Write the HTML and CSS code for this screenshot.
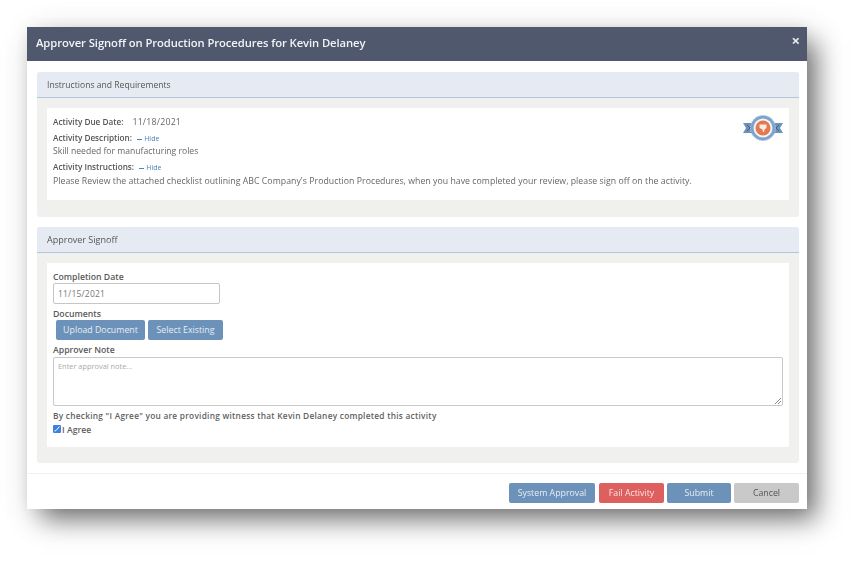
FILE: index.html
```html
<!DOCTYPE html>
<html lang="en">
<head>
<meta charset="utf-8">
<title>Approver Signoff</title>
<link rel="stylesheet" href="styles.css">
</head>
<body>
<div class="modal">
  <header class="modal-head">
    <h1 class="modal-title">Approver Signoff on Production Procedures for Kevin Delaney</h1>
    <span class="close">×</span>
  </header>
  <main class="modal-body">
    <section class="panel panel-top">
      <div class="panel-head">Instructions and Requirements</div>
      <div class="panel-body">
        <div class="card card-info">
          <svg class="badge" viewBox="0 0 40 26" width="40" height="26" aria-hidden="true">
            <path d="M0 8h10v10H0l3-5z" fill="#6d92ba"/>
            <path d="M40 8H30v10h10l-3-5z" fill="#6d92ba"/>
            <path d="M4 10l3 3-3 3M36 10l-3 3 3 3" fill="none" stroke="#46607f" stroke-width="1"/>
            <circle cx="20" cy="13" r="12.500" fill="#7ea4c9" stroke="#a9c3dc" stroke-width="1" stroke-dasharray="1.500 1"/>
            <circle cx="20" cy="13" r="9.500" fill="#eef3f8"/>
            <circle cx="20" cy="13" r="7.500" fill="#e5784f"/>
            <path d="M16.500 9.500h7v3.500l-2 1.500-.5 2.500h-1l-.5-2.500-3-1.500z" fill="#f7ece6"/>
          </svg>
          <div class="due"><b>Activity Due Date:</b><span class="due-val">11/18/2021</span></div>
          <div class="label-row"><b>Activity Description:</b> <a class="hide"><i class="dash"></i>Hide</a></div>
          <p class="text">Skill needed for manufacturing roles</p>
          <div class="label-row label-second"><b>Activity Instructions:</b> <a class="hide"><i class="dash"></i>Hide</a></div>
          <p class="text text-long">Please Review the attached checklist outlining ABC Company's Production Procedures, when you have completed your review, please sign off on the activity.</p>
        </div>
      </div>
    </section>
    <section class="panel panel-bottom">
      <div class="panel-head">Approver Signoff</div>
      <div class="panel-body">
        <div class="card card-form">
          <label class="field-label">Completion Date</label>
          <div class="date-input">11/15/2021</div>
          <label class="field-label label-docs">Documents</label>
          <div class="doc-buttons">
            <span class="btn btn-blue btn-upload">Upload Document</span>
            <span class="btn btn-blue btn-select">Select Existing</span>
          </div>
          <label class="field-label label-note">Approver Note</label>
          <div class="note">Enter approval note...
            <svg class="grip" viewBox="0 0 6 6" width="6" height="6" aria-hidden="true"><path d="M0 6L6 0M3 6l3-3" stroke="#8a8a8a" stroke-width="1"/></svg>
          </div>
          <p class="agree-text">By checking "I Agree" you are providing witness that Kevin Delaney completed this activity</p>
          <div class="agree">
            <span class="check"><svg viewBox="0 0 8 8" width="8" height="8" aria-hidden="true"><path d="M1.500 6L3 5.500 6.500 1.500" fill="none" stroke="#fff" stroke-width="1"/></svg></span>
            <span>I Agree</span>
          </div>
        </div>
      </div>
    </section>
  </main>
  <footer class="modal-foot">
    <span class="btn btn-foot btn-blue btn-system">System Approval</span>
    <span class="btn btn-foot btn-red">Fail Activity</span>
    <span class="btn btn-foot btn-blue btn-submit">Submit</span>
    <span class="btn btn-foot btn-grey">Cancel</span>
  </footer>
</div>
</body>
</html>
```
FILE: styles.css
```css
* { box-sizing: border-box; }
html, body { margin: 0; height: 100%; }
body {
  background: #fff;
  padding: 27px 0 0 27px;
  font-family: "Open Sans", "Noto Sans", sans-serif;
  color: #555;
  overflow: hidden;
}
.modal {
  width: 780px;
  height: 482px;
  background: #fff;
  display: flex;
  flex-direction: column;
  box-shadow: 12px 13px 24px -3px rgba(0,0,0,.5), 5px 7px 34px rgba(0,0,0,.12), 0 0 14px rgba(0,0,0,.05);
}
.modal-head, .modal-body, .modal-foot { filter: blur(.6px); }
.modal-head {
  height: 34px;
  background: #50586e;
  display: flex;
  align-items: center;
  justify-content: space-between;
  padding: 0 7px 0 9px;
  flex: none;
}
.modal-title { margin: -3px 0 0; font-size: 11.250px; font-weight: 600; color: #f2f3f6; letter-spacing: -.08px; }
.close { font-size: 15px; font-weight: 700; color: #e8eaee; line-height: 1; margin-top: -8px; }
.modal-body { padding: 11px 8px 0 10px; flex: 1; display: flex; flex-direction: column; gap: 10px; }
.panel { background: #f0f0ef; border-radius: 3px; display: flex; flex-direction: column; }
.panel-top { height: 145px; }
.panel-bottom { height: 236px; }
.panel-head {
  height: 26px;
  flex: none;
  background: #e6ebf3;
  border-bottom: 1px solid #b4c6da;
  border-radius: 3px 3px 0 0;
  padding: 0 10px;
  display: flex;
  align-items: center;
  font-size: 8.600px;
  color: #555;
}
.panel-bottom .panel-head { font-size: 9px; }
.panel-body { padding: 10px 10px 0; flex: 1; }
.card { background: #fff; position: relative; padding: 0 6px; }
.card-info { height: 92px; padding-top: 8px; }
.card-form { height: 184px; padding-top: 9px; }
.badge { position: absolute; top: 7px; right: 6px; }
.due { font-size: 8.200px; line-height: 12px; display: flex; align-items: center; gap: 9px; }
.due b, .label-row b { font-weight: 600; color: #555; }
.due-val { font-size: 8.800px; color: #666; letter-spacing: .2px; }
.label-row { font-size: 8.200px; line-height: 10px; margin-top: 5px; }
.label-second { margin-top: 6px; }
.hide { font-size: 7px; color: #4f82b8; margin-left: 3px; }
.dash { display: inline-block; width: 5px; height: 1px; background: #4f82b8; vertical-align: middle; margin-right: 2px; }
.text { margin: 2px 0 0; font-size: 8.600px; line-height: 10px; color: #666; white-space: nowrap; }
.text-long { margin-top: 3px; font-size: 8.730px; letter-spacing: .04px; }
.field-label { display: block; font-size: 8.700px; font-weight: 600; color: #5a5a5a; line-height: 11px; }
.date-input {
  width: 167px;
  height: 21px;
  margin-top: 0;
  border: 1px solid #c6c6c6;
  border-radius: 2px;
  padding: 0 4px;
  display: flex;
  align-items: center;
  font-size: 8.500px;
  color: #777;
  letter-spacing: .2px;
}
.label-docs { margin-top: 5px; }
.doc-buttons { display: flex; gap: 3px; margin: 0 0 0 3px; }
.btn {
  display: inline-flex;
  align-items: center;
  justify-content: center;
  height: 20px;
  padding: 0;
  border-radius: 2px;
  font-size: 8.800px;
  color: #e6edf5;
}
.btn-upload { width: 89px; }
.btn-select { width: 75px; }
.btn-blue { background: #6d92ba; }
.btn-red { background: #dd5f5e; color: #fbe4e2; }
.btn-grey { background: #c9c9c9; color: #555; }
.label-note { margin-top: 5px; }
.note {
  position: relative;
  width: 730px;
  height: 49px;
  margin-top: 1px;
  border: 1px solid #c9c9c9;
  border-radius: 2px;
  padding: 3px 4px;
  font-size: 7.400px;
  color: #aaa;
}
.grip { position: absolute; right: 1px; bottom: 1px; }
.agree-text { margin: 4px 0 0; font-size: 8.300px; font-weight: 600; color: #5f5f5f; line-height: 11px; letter-spacing: .26px; }
.agree { display: flex; align-items: center; font-size: 8.700px; font-weight: 600; color: #5f5f5f; margin-top: 4px; line-height: 11px; }
.check { width: 8px; height: 8px; background: #3c83e0; border-radius: 1px; margin-top: -3px; margin-right: 1px; display: inline-flex; }
.modal-foot {
  height: 36px;
  flex: none;
  margin: 10px 0 0;
  border-top: 1px solid #f0f0f0;
  display: flex;
  justify-content: flex-end;
  gap: 3px;
  padding: 9px 8px 0 0;
}
.btn-system { width: 86px; margin-right: 1px; }
.btn-foot { flex: none; }
.btn-red { width: 65px; }
.btn-submit { width: 64px; }
.btn-grey { width: 65px; }
```
